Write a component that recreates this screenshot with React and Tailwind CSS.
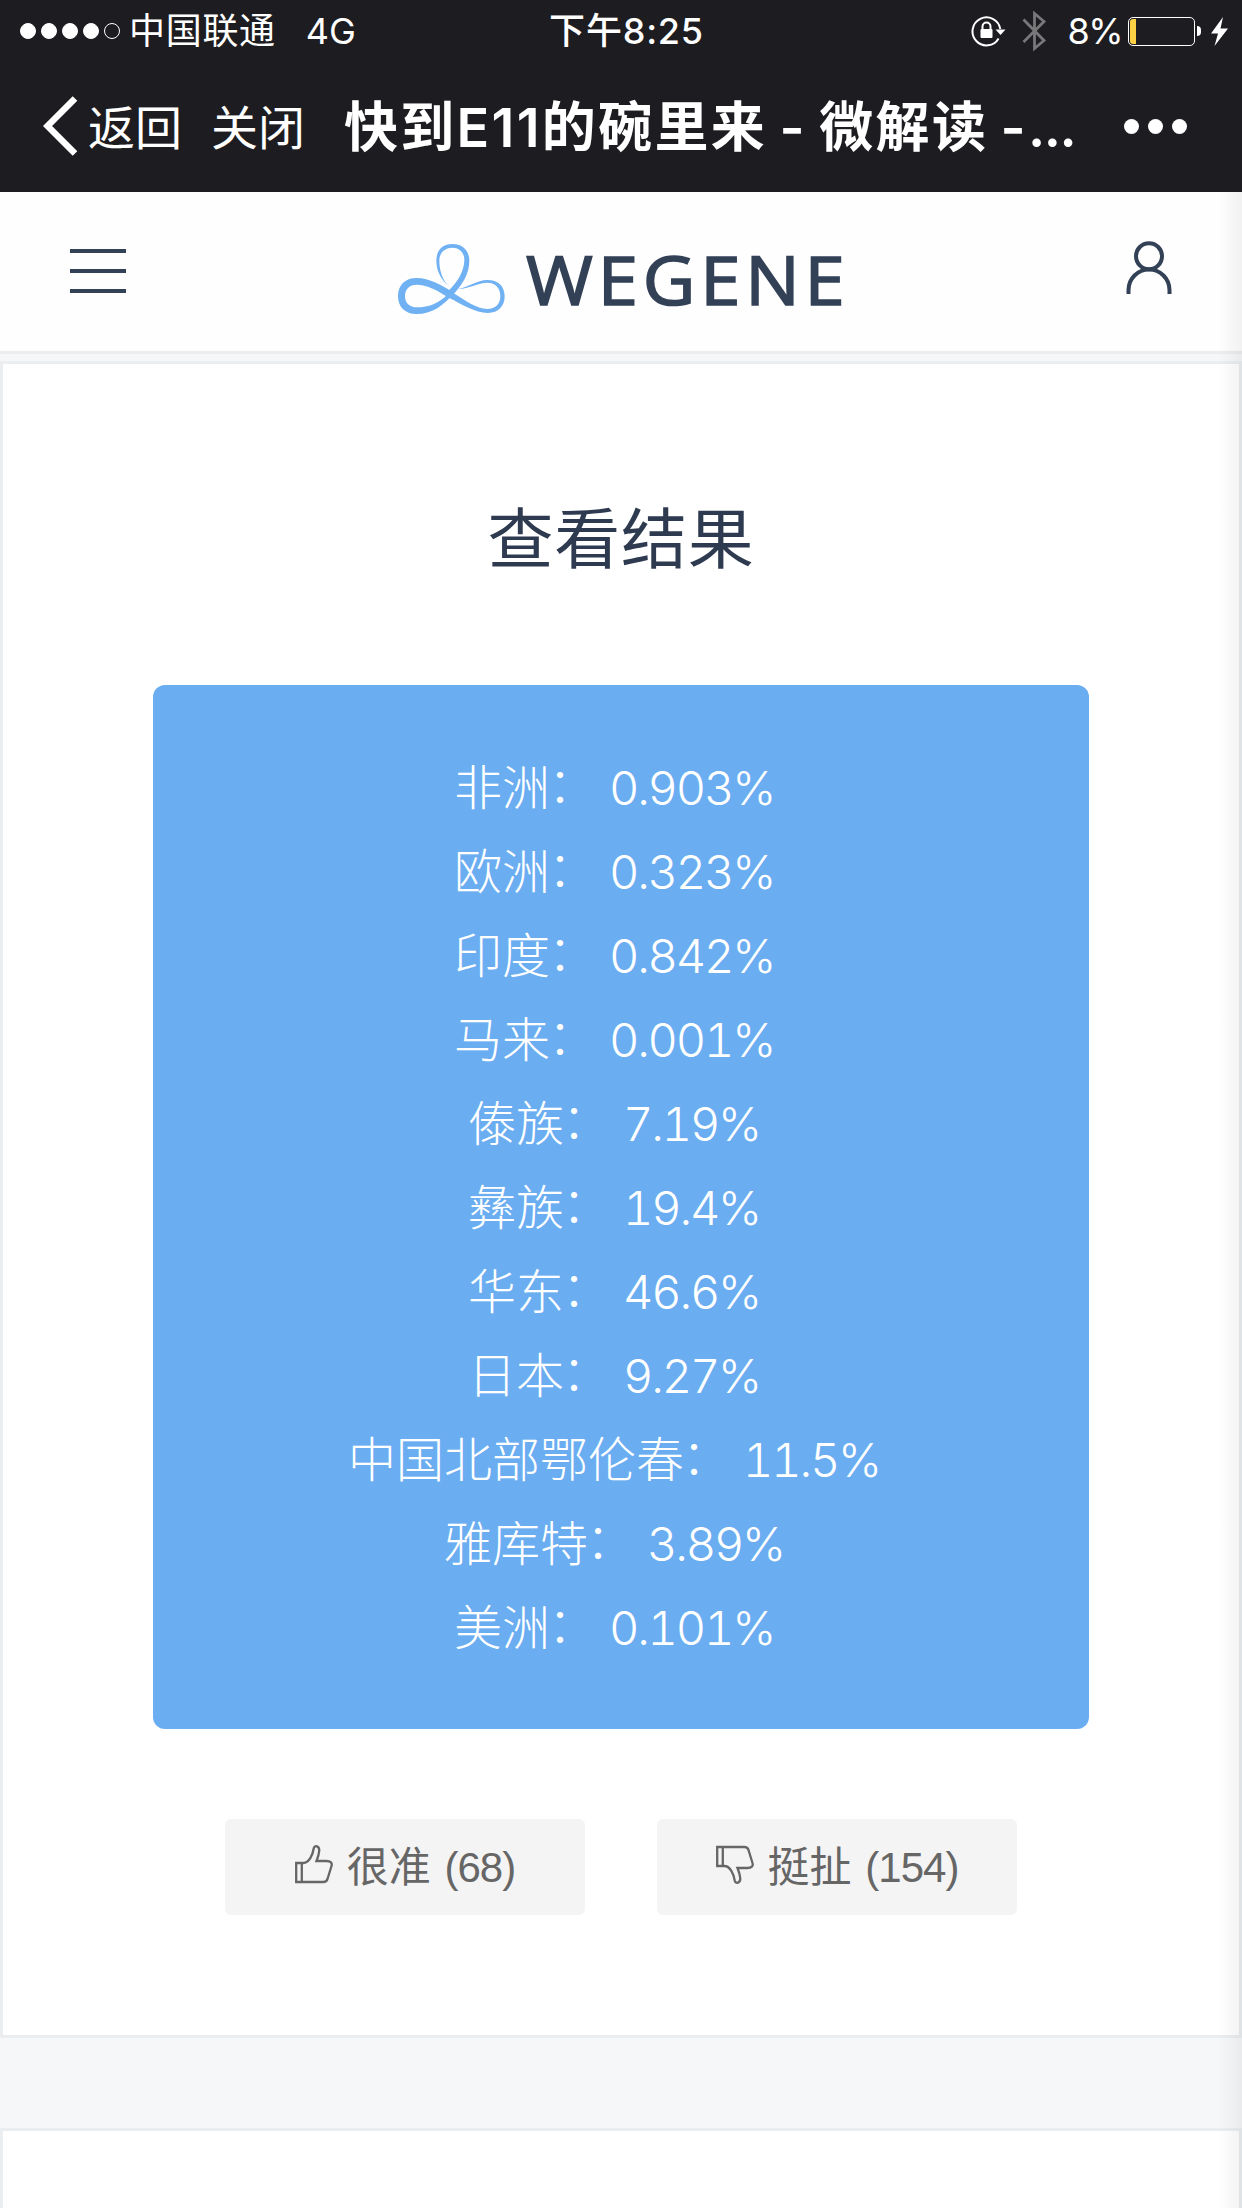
import clsx from 'clsx';

const results = [
  { label: '非洲', value: '0.903%' },
  { label: '欧洲', value: '0.323%' },
  { label: '印度', value: '0.842%' },
  { label: '马来', value: '0.001%' },
  { label: '傣族', value: '7.19%' },
  { label: '彝族', value: '19.4%' },
  { label: '华东', value: '46.6%' },
  { label: '日本', value: '9.27%' },
  { label: '中国北部鄂伦春', value: '11.5%' },
  { label: '雅库特', value: '3.89%' },
  { label: '美洲', value: '0.101%' },
];

function StatusBar() {
  return (
    <div className="grid h-[60px] grid-cols-3 items-center pl-5 text-[36px] leading-[62px]">
      <div className="flex items-center">
        <div className="flex gap-[5px]">
          {[1, 2, 3, 4, 5].map((n) => (
            <span key={n} className={clsx('size-4 rounded-full border border-white', n < 5 && 'bg-white')} />
          ))}
        </div>
        <span className="ml-[9px] tracking-[0.7px] whitespace-nowrap">中国联通</span>
        <span className="ml-[30px]">4G</span>
      </div>
      <div className="pr-[9px] text-center font-medium tracking-[0.8px]">下午8:25</div>
      <div className="flex items-center justify-end pr-[14px]">
        <svg className="h-[32px] w-[36px]" viewBox="0 0 36 32" fill="none">
          <path d="M27.6 23.5A14 14 0 1 1 29.3 14" stroke="#fff" strokeWidth="2" />
          <path d="M24.5 14.5h10L29.5 20z" fill="#fff" />
          <path d="M11.5 15v-3.5a4 4 0 0 1 8 0V15" stroke="#fff" strokeWidth="2" />
          <rect x="9.5" y="14" width="12" height="9" rx="1" fill="#fff" />
        </svg>
        <svg className="ml-[15px] h-[42px] w-[25px]" viewBox="0 0 25 42" fill="none">
          <path d="M1.5 9.500L22 30.500L12.500 38.500V3.500L22 11.500L1.500 32" stroke="#78787b" strokeWidth="2.800" />
        </svg>
        <span className="ml-[20px] tracking-[-1.500px]">8%</span>
        <div className="ml-[6px] h-[29px] w-[67px] rounded-[5px] border border-white p-px">
          <div className="h-full w-[6px] rounded-l-[3px] bg-[#fccf45]" />
        </div>
        <div className="ml-[2px] h-[10px] w-1 rounded-r-full bg-white" />
        <svg className="ml-[10px] h-[29px] w-[17px]" viewBox="0 0 17 29">
          <path d="M12 0L0 16.500h7L3.500 29L17 11.500H9.500z" fill="#fff" />
        </svg>
      </div>
    </div>
  );
}

function NavBar() {
  return (
    <div className="flex h-[132px] items-center pl-[43px]">
      <svg className="h-[60px] w-[36px]" viewBox="0 0 36 60" fill="none">
        <path d="M32 2.500L4.500 30L32 57.500" stroke="#fff" strokeWidth="6.500" />
      </svg>
      <span className="mt-[4px] ml-[9px] w-[96px] text-[47px]">返回</span>
      <span className="mt-[4px] ml-[27px] w-[96px] text-[47px]">关闭</span>
      <h1 className="mt-[3px] ml-[37px] w-[732px] text-[54px] font-semibold tracking-[2.300px] [word-spacing:-3.5px] whitespace-nowrap">
        快到E11的碗里来 - 微解读 -<span className="tracking-[-1.500px]">...</span>
      </h1>
      <div className="ml-[48px] flex gap-[9px]">
        <span className="size-[15px] rounded-full bg-white" />
        <span className="size-[15px] rounded-full bg-white" />
        <span className="size-[15px] rounded-full bg-white" />
      </div>
    </div>
  );
}

function SiteHeader() {
  return (
    <header className="flex h-[162px] items-start justify-between border-b-[3px] border-[#ebeef1] bg-[#fefefe] pr-[69px] pl-[70px]">
      <div className="mt-[57px] flex flex-col gap-4">
        <span className="h-1 w-14 bg-[#334157]" />
        <span className="h-1 w-14 bg-[#334157]" />
        <span className="h-1 w-14 bg-[#334157]" />
      </div>
      <div className="mt-[51px] flex">
        <svg className="h-[72px] w-[108px]" viewBox="54 69 324 216" fill="#6fb1f3">
          <path d="M210 202C180 178 169 148 169 122C169 90 188 72 217 72C248 72 268 92 268 122C268 160 248 192 222 221L205 212C235 185 253 150 253 120C253 97 238 83 217 83C196 83 178 97 178 122C178 150 187 182 210 202Z" />
          <path
            fillRule="evenodd"
            d="M222 219C190 258 155 282 110 282C74 282 54 260 54 228C54 197 74 174 110 174C148 174 185 195 222 219ZM198 228C170 210 140 194 110 194C88 194 75 208 75 228C75 249 88 262 112 262C145 262 175 250 198 228Z"
          />
          <path d="M208 234C245 252 285 279 324 279C355 279 374 258 374 229C374 198 354 180 322 180C292 180 262 203 234 207C262 208 295 188 322 188C347 188 361 204 361 229C361 252 346 267 322 267C290 267 255 240 220 219Z" />
        </svg>
        <span className="ml-[20px] w-[327px] origin-left scale-x-[1.08] font-['Open_Sans'] text-[67px] leading-[73px] font-normal tracking-[4.5px] text-[#334157] [-webkit-text-stroke:1.6px_#334157]">
          WEGENE
        </span>
      </div>
      <svg className="mt-[48px] h-[54px] w-[48px]" viewBox="0 0 48 54" fill="none" stroke="#334157" strokeWidth="4">
        <circle cx="24" cy="16.200" r="13" />
        <path d="M3.500 54v-4a20.500 20.500 0 0 1 41 0v4" />
      </svg>
    </header>
  );
}

function ThumbIcon({ down }) {
  return (
    <svg className={clsx('h-[39px] w-[38px]', down && '-scale-y-100')} viewBox="0 0 38 39" fill="none" stroke="#666" strokeWidth="2.300">
      <path d="M1.200 18h7c6 0 9.500-8 10.500-14.500c.8-4 6-2.500 5.500 2.500c-.3 4-1.500 7-2.700 10h10c4 0 6 2 5 5l-4 13c-.7 2-2 3-4 3H1.200zM6.800 18v19" />
    </svg>
  );
}

function VoteButton({ down, label, count }) {
  return (
    <button className="flex h-24 w-[360px] items-center justify-center rounded-md bg-[#f4f4f4] pt-px font-['Liberation_Sans','Noto_Sans_CJK_SC',sans-serif] text-[42px] text-[#666]">
      <span className="-mt-1.5">
        <ThumbIcon down={down} />
      </span>
      <span className="ml-[14px]">
        {label} <span className="ml-[2px] tracking-[-1px]">({count})</span>
      </span>
    </button>
  );
}

function App() {
  return (
    <div className="relative h-[2208px] w-[1242px] overflow-hidden bg-[#f5f7f9] font-['Inter','Noto_Sans_CJK_SC',sans-serif]">
      <div className="h-48 bg-[#1d1c20] text-white">
        <StatusBar />
        <NavBar />
      </div>
      <SiteHeader />

      <main className="mt-[7px] flex h-[1677px] flex-col items-center border-[3px] border-[#ebeef1] bg-white">
        <h2 className="mt-[125px] text-[66px] leading-[100px] tracking-[0.800px] text-[#2d3a4f]">查看结果</h2>
        <ul className="mt-[96px] h-[1044px] w-[936px] rounded-xl bg-[#6aadf1] pt-[61px] text-center text-[48px] leading-[84px] font-light text-white">
          {results.map((r) => (
            <li key={r.label} className="flex justify-center">
              <span className="whitespace-nowrap">
                {r.label}
                <span className="inline-block -translate-x-0.5 -translate-y-[3px]">：</span>
              </span>
              <span className="ml-[11px] pr-[14px] text-[47px] tracking-[-2.200px] tabular-nums">{r.value}</span>
            </li>
          ))}
        </ul>
        <div className="mt-[90px] flex gap-[72px]">
          <VoteButton label="很准" count={68} />
          <VoteButton down label="挺扯" count={154} />
        </div>
      </main>

      <section className="mt-[90px] h-[90px] border-[3px] border-b-0 border-[#ebeef1] bg-white" />

      {/* soft shade along the right edge of the page */}
      <div className="absolute top-48 right-0 bottom-0 w-6 bg-gradient-to-r from-transparent to-black/5" />
    </div>
  );
}

export default App;
